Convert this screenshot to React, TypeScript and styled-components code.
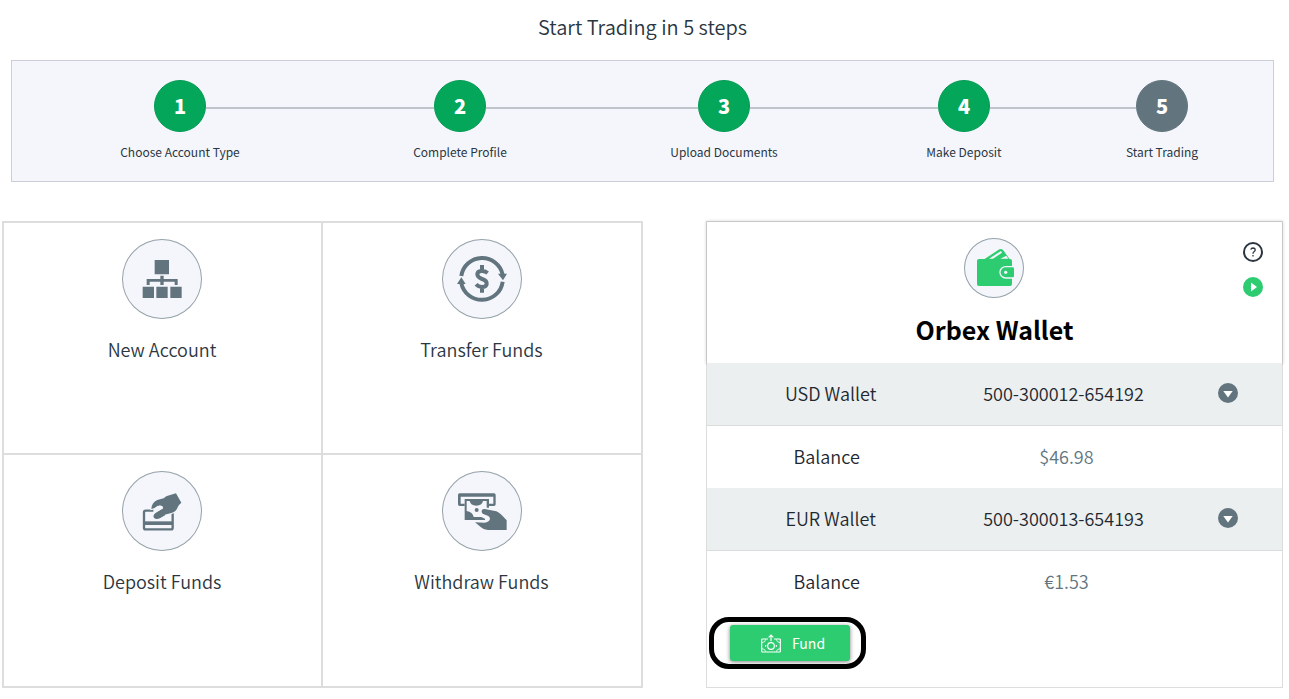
import React from "react";
import styled, { createGlobalStyle } from "styled-components";

const slate = "#62757f";
const green = "#2ecc71";
const ink = "#2b3641";
const tint = "#f4f6fc";

const GlobalStyle = createGlobalStyle`
  *, *::before, *::after { box-sizing: border-box; }
  body {
    margin: 0;
    background: #fff;
    color: ${ink};
    font-family: "Noto Sans CJK SC", "Noto Sans", sans-serif;
  }
`;

const Page = styled.div`
  padding: 15px 6px 11px 2px;
`;

const PageTitle = styled.h1`
  margin: 0 0 21px;
  font-size: 20px;
  font-weight: 350;
  line-height: 24px;
  text-align: center;
`;

const Stepper = styled.ol`
  display: grid;
  grid-template-columns: 336fr 224fr 304fr 176fr 220fr;
  list-style: none;
  margin: 0 9px 39px;
  padding: 19px 1px 20px 0;
  background: ${tint};
  border: 1px solid #cccfd9;
`;

const Step = styled.li`
  display: flex;
  flex-direction: column;
  gap: 11px;
`;

const Track = styled.div`
  display: flex;
  align-items: center;
`;

const Connector = styled.span<{ $hidden?: boolean }>`
  flex: 1;
  height: 2px;
  margin-top: 4px;
  background: ${(p) => (p.$hidden ? "transparent" : "#bfc5cb")};
`;

const StepNumber = styled.span<{ $done: boolean }>`
  width: 52px;
  height: 52px;
  border-radius: 50%;
  border: 1px solid ${(p) => (p.$done ? "#049b51" : slate)};
  background: ${(p) => (p.$done ? "#04a65a" : slate)};
  color: #fff;
  font-size: 20px;
  font-weight: 900;
  line-height: 50px;
  text-align: center;
`;

const StepLabel = styled.span`
  font-size: 12px;
  line-height: 18px;
  text-align: center;
`;

const Columns = styled.main`
  display: grid;
  grid-template-columns: 641fr 577fr;
  gap: 63px;
`;

const Actions = styled.nav`
  display: grid;
  grid-template-columns: 317fr 318fr;
  grid-template-rows: auto 1fr;
  gap: 2px;
  padding: 2px;
  background: #ddd;
`;

const ActionTile = styled.a`
  display: flex;
  flex-direction: column;
  align-items: center;
  gap: 18px;
  min-height: 230px;
  padding: 16px 17px 16px 16px;
  background: #fff;
  color: ${ink};
  font-size: 18px;
  font-weight: 350;
  line-height: 24px;
  text-decoration: none;
`;

const RoundIcon = styled.span<{ $size: number }>`
  display: block;
  width: ${(p) => p.$size}px;
  height: ${(p) => p.$size}px;
  border-radius: 50%;
  background: ${tint};
  box-shadow: inset 0 0 0 1px #96a2a8;

  svg {
    display: block;
    width: 100%;
    height: 100%;
  }
`;

const WalletCard = styled.section`
  border: 1px solid #ddd;
`;

const WalletHeader = styled.header`
  display: grid;
  grid-template-columns: 1fr auto 1fr;
  padding: 16px 19px 16px;
  box-shadow: 0 0 3px 1px rgba(0, 0, 0, 0.16);
`;

const Brand = styled.div`
  grid-column: 2;
  display: flex;
  flex-direction: column;
  align-items: center;
  gap: 14px;
`;

const WalletTitle = styled.h2`
  margin: 0;
  color: #000;
  font-size: 25px;
  font-weight: 700;
  line-height: 35px;
`;

const HeaderTools = styled.div`
  display: flex;
  flex-direction: column;
  align-items: flex-end;
  gap: 15px;
  padding-top: 4px;
`;

const IconButton = styled.button`
  display: block;
  width: 20px;
  height: 20px;
  padding: 0;
  border: 0;
  background: none;
  cursor: pointer;

  svg {
    display: block;
  }
`;

const Accounts = styled.table`
  position: relative;
  width: 100%;
  border-spacing: 0;
  table-layout: fixed;
  background: #fff;
  color: #1f2830;
  font-size: 18px;
  font-weight: 350;
  line-height: 24px;

  th,
  td {
    padding: 0 0 2px;
    font-weight: 350;
    text-align: center;
    vertical-align: middle;
  }
`;

const AccountRow = styled.tr`
  height: 63px;
  background: #ebefef;

  th,
  td {
    border-bottom: 1px solid #d9dddd;
  }

  td:last-child {
    padding-left: 2px;
  }

  ${IconButton} {
    margin: 0 auto;
  }
`;

const BalanceRow = styled.tr`
  height: 62px;

  th {
    padding-right: 8px;
  }

  td {
    padding-left: 6px;
    color: ${slate};
  }
`;

const CardFooter = styled.footer`
  display: flex;
  padding: 4px 2px 18px;
`;

const Highlight = styled.div`
  padding: 3px 11px 3px 16px;
  border: 5px solid #000;
  border-radius: 20px;
`;

const FundButton = styled.button`
  display: flex;
  align-items: center;
  justify-content: center;
  gap: 11px;
  width: 120px;
  height: 36px;
  padding: 0 0 0 6px;
  border: 0;
  border-radius: 3px;
  background: ${green};
  box-shadow: 0 1px 4px rgba(0, 0, 0, 0.5);
  color: #fff;
  font: inherit;
  font-size: 14px;
  line-height: 20px;
  cursor: pointer;
`;

const NewAccountIcon = () => (
  <svg viewBox="36 27 240 240" fill={slate} aria-hidden="true">
    <path d="M134 90h43v43h-43zM98 170h34v34H98zM139 170h34v34h-34zM181 170h34v34h-34z" />
    <path d="M151 137h10v10h42v18h-9v-10h-33v10h-10v-10h-32v10h-9v-18h41z" />
  </svg>
);

const TransferIcon = () => (
  <svg viewBox="36 27 240 240" fill="none" stroke={slate} strokeWidth="12" aria-hidden="true">
    <path d="M94 138A63 63 0 0 1 218 134M218 155A63 63 0 0 1 94 160" />
    <path d="M204 131h27l-12 20zM81 162h26l-13 -20z" fill={slate} stroke="none" />
    <path d="M173 129Q164 122 154 123Q142 124 142 133Q142 142 156 147Q171 152 170 162Q169 171 156 171Q146 171 138 163M156 105v18M156 171v17" />
  </svg>
);

const DepositIcon = () => (
  <svg viewBox="36 27 240 240" fill={slate} aria-hidden="true">
    <rect x="102" y="146" width="86" height="56" rx="5" fill="none" stroke={slate} strokeWidth="7" />
    <path d="M102 178h85v11h-85z" />
    <path
      d="M198 94L214 122Q206 128 203 136Q198 150 184 153Q166 156 151 166Q138 172 132 166Q128 159 138 152L156 142Q163 134 153 131Q142 130 134 138L124 141Q125 121 142 114L161 109Q168 102 178 100z"
      stroke={tint}
      strokeWidth="6"
      paintOrder="stroke"
    />
    <path d="M130 143L136 137Q144 129 153 131Q162 133 157 141L140 152L130 157z" fill={tint} />
    <path d="M157 141L138 152Q128 159 132 167Q138 174 151 168L165 160z" />
  </svg>
);

const WithdrawIcon = () => (
  <svg viewBox="36 27 240 240" fill={slate} aria-hidden="true">
    <path d="M89 94h103q5 0 5 5v28q0 5-5 5h-15v-7h13v-21H92v21h12v7H89q-5 0-5-5V99q0-5 5-5z" />
    <path d="M104 111h73v26h-7v-20h-11Q156 131 139 131Q122 131 119 117h-9v30Q128 150 131 165h23l11 5v4h-61z" />
    <circle cx="140" cy="144" r="6" />
    <path d="M155 146Q156 140 164 141L199 148Q207 151 215 159L230 175v29h-57Q160 203 152 195L135 181L164 182Q177 181 180 171Q179 162 169 160L158 155Q154 151 155 146z" />
  </svg>
);

const WalletIcon = () => (
  <svg viewBox="27 24 180 180" fill={green} aria-hidden="true">
    <path d="M84 90L133 58Q141 54 146 62L164 88V92H84z" />
    <path d="M102 86L138 63L141 68L114 86zM136 86L154 77L160 86z" fill={tint} />
    <rect x="66" y="87" width="105" height="81" rx="6" />
    <path d="M176 108h-24a19 19 0 0 0 0 38h24z" fill={tint} />
    <path d="M173 112h-21a15 15 0 0 0 0 30h21q4 0 4-4v-22q0-4-4-4z" />
    <circle cx="152" cy="127" r="5" fill={tint} />
  </svg>
);

const HelpIcon = () => (
  <svg width="20" height="20" viewBox="0 0 20 20" fill="none" stroke="#2b3641" aria-hidden="true">
    <circle cx="10" cy="10" r="9" strokeWidth="2" />
    <path d="M7.8 7.6Q8.2 6 10 6Q12.2 6.1 12.2 7.9Q12.1 9 11 9.7Q10 10.3 10 11.8M10 13v1.5" strokeWidth="1.3" />
  </svg>
);

const PlayIcon = () => (
  <svg width="20" height="20" viewBox="0 0 20 20" aria-hidden="true">
    <circle cx="10" cy="10" r="10" fill={green} />
    <path d="M8 5.5v9l6-4.5z" fill="#fff" />
  </svg>
);

const ExpandIcon = () => (
  <svg width="20" height="20" viewBox="0 0 20 20" aria-hidden="true">
    <circle cx="10" cy="10" r="10" fill={slate} />
    <path d="M5.3 8h9.4L10 14.5z" fill="#fff" />
  </svg>
);

const FundIcon = () => (
  <svg width="20" height="19" viewBox="183 86 60 57" fill="none" stroke="#fff" strokeWidth="3.5" aria-hidden="true">
    <path d="M204 101H187Q185 101 185 103V138Q185 140 187 140H239Q241 140 241 138V103Q241 101 239 101H222" />
    <circle cx="213" cy="122" r="10" />
    <path d="M213 108V90M206 96L213 89L220 96" />
    <path d="M186 112Q196 111 197 102M240 112Q230 111 229 102M186 130Q196 131 197 139M240 130Q230 131 229 139" strokeWidth="2.5" />
    <path d="M197 119v5M229 119v5" />
  </svg>
);

const steps = ["Choose Account Type", "Complete Profile", "Upload Documents", "Make Deposit", "Start Trading"];

const actions = [
  { label: "New Account", Icon: NewAccountIcon },
  { label: "Transfer Funds", Icon: TransferIcon },
  { label: "Deposit Funds", Icon: DepositIcon },
  { label: "Withdraw Funds", Icon: WithdrawIcon },
];

const accounts = [
  { name: "USD Wallet", number: "500-300012-654192", balance: "$46.98" },
  { name: "EUR Wallet", number: "500-300013-654193", balance: "€1.53" },
];

export default function App() {
  return (
    <Page>
      <GlobalStyle />
      <PageTitle>Start Trading in 5 steps</PageTitle>
      <Stepper>
        {steps.map((label, i) => (
          <Step key={label}>
            <Track>
              <Connector $hidden={i === 0} />
              <StepNumber $done={i < steps.length - 1}>{i + 1}</StepNumber>
              <Connector $hidden={i === steps.length - 1} />
            </Track>
            <StepLabel>{label}</StepLabel>
          </Step>
        ))}
      </Stepper>
      <Columns>
        <Actions>
          {actions.map(({ label, Icon }) => (
            <ActionTile key={label} href="#">
              <RoundIcon $size={80}>
                <Icon />
              </RoundIcon>
              {label}
            </ActionTile>
          ))}
        </Actions>
        <WalletCard>
          <WalletHeader>
            <Brand>
              <RoundIcon $size={60}>
                <WalletIcon />
              </RoundIcon>
              <WalletTitle>Orbex Wallet</WalletTitle>
            </Brand>
            <HeaderTools>
              <IconButton aria-label="Help">
                <HelpIcon />
              </IconButton>
              <IconButton aria-label="Play video">
                <PlayIcon />
              </IconButton>
            </HeaderTools>
          </WalletHeader>
          <Accounts>
            <colgroup>
              <col style={{ width: "43%" }} />
              <col style={{ width: "38%" }} />
              <col style={{ width: "19%" }} />
            </colgroup>
            <tbody>
              {accounts.map((account) => (
                <React.Fragment key={account.name}>
                  <AccountRow>
                    <th scope="row">{account.name}</th>
                    <td>{account.number}</td>
                    <td>
                      <IconButton aria-label={`Expand ${account.name}`}>
                        <ExpandIcon />
                      </IconButton>
                    </td>
                  </AccountRow>
                  <BalanceRow>
                    <th scope="row">Balance</th>
                    <td>{account.balance}</td>
                    <td />
                  </BalanceRow>
                </React.Fragment>
              ))}
            </tbody>
          </Accounts>
          <CardFooter>
            <Highlight>
              <FundButton>
                <FundIcon />
                Fund
              </FundButton>
            </Highlight>
          </CardFooter>
        </WalletCard>
      </Columns>
    </Page>
  );
}
